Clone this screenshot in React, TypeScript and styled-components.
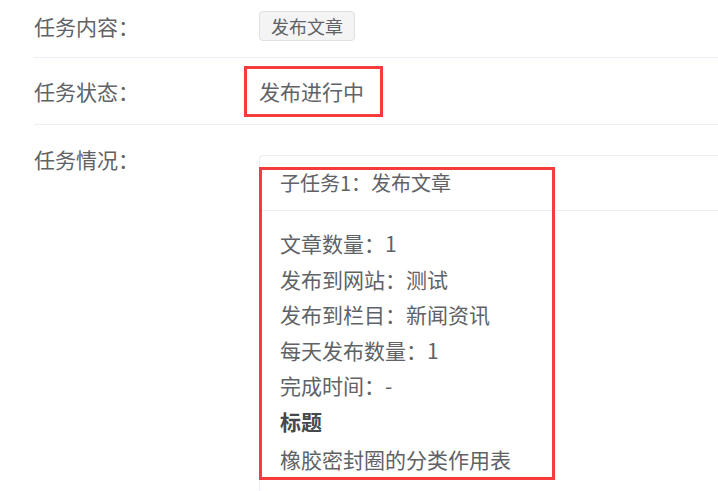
import React from "react";
import styled, { createGlobalStyle } from "styled-components";

const GlobalStyle = createGlobalStyle`
  html, body {
    margin: 0;
    padding: 0;
    background: #ffffff;
    overflow: hidden;
  }
  body {
    font-family: "Noto Sans CJK SC", "Noto Sans", sans-serif;
    color: #606266;
  }
`;

const Page = styled.div`
  padding-left: 34px;
  width: 684px;
`;

const Row = styled.div<{ $pt: number; $pb: number; $align?: string; $last?: boolean }>`
  display: grid;
  grid-template-columns: 225px 1fr;
  align-items: ${(p) => p.$align ?? "center"};
  padding-top: ${(p) => p.$pt}px;
  padding-bottom: ${(p) => p.$pb}px;
  border-bottom: ${(p) => (p.$last ? "none" : "1px solid #ebeef5")};
`;

const Label = styled.div<{ $mt?: number }>`
  font-size: 21px;
  line-height: 30px;
  color: #606266;
  margin-top: ${(p) => p.$mt ?? 0}px;
  white-space: nowrap;
`;

const Value = styled.div`
  font-size: 21px;
  line-height: 30px;
  color: #606266;
  white-space: nowrap;
`;

const Tag = styled.span`
  display: inline-flex;
  align-items: center;
  justify-self: start;
  box-sizing: border-box;
  height: 30px;
  padding: 0 11px;
  font-size: 18px;
  color: #606266;
  background: #f4f4f5;
  border: 1px solid #dedfe3;
  border-radius: 4px;
  white-space: nowrap;
`;

const Marked = styled.span`
  position: relative;
  justify-self: start;
  &::after {
    content: "";
    position: absolute;
    top: -10px;
    bottom: -11px;
    left: -15px;
    right: -19px;
    border: 3px solid #f63b3b;
    pointer-events: none;
  }
`;

const Card = styled.div`
  position: relative;
  margin-top: 30px;
  border: 1px solid #ebeef5;
  border-right: none;
  border-radius: 4px 0 0 4px;
  background: #fff;
`;

const CardHeader = styled.div`
  padding: 12px 20px;
  font-size: 20px;
  line-height: 30px;
  color: #606266;
  border-bottom: 1px solid #ebeef5;
  white-space: nowrap;
`;

const CardBody = styled.div`
  padding: 15px 20px 14px;
`;

const Line = styled.div<{ $mt?: number }>`
  font-size: 21px;
  line-height: 35.5px;
  color: #606266;
  margin-top: ${(p) => p.$mt ?? 0}px;
  white-space: nowrap;
`;

const Title = styled(Line)`
  font-weight: 700;
  color: #45484d;
`;

const Annotation = styled.div`
  position: absolute;
  top: 11px;
  left: -1px;
  width: 296px;
  height: 313px;
  box-sizing: border-box;
  border: 3px solid #f63b3b;
  pointer-events: none;
`;

const details = [
  "文章数量：1",
  "发布到网站：测试",
  "发布到栏目：新闻资讯",
  "每天发布数量：1",
  "完成时间：-",
];

export default function App() {
  return (
    <>
      <GlobalStyle />
      <Page>
        <Row $pt={11} $pb={16}>
          <Label>任务内容：</Label>
          <Tag>发布文章</Tag>
        </Row>
        <Row $pt={18} $pb={18}>
          <Label>任务状态：</Label>
          <Marked>
            <Value>发布进行中</Value>
          </Marked>
        </Row>
        <Row $pt={0} $pb={0} $align="start" $last>
          <Label $mt={19}>任务情况：</Label>
          <Card>
            <CardHeader>子任务1：发布文章</CardHeader>
            <CardBody>
              {details.map((d) => (
                <Line key={d}>{d}</Line>
              ))}
              <Title>标题</Title>
              <Line $mt={3}>橡胶密封圈的分类作用表</Line>
            </CardBody>
            <Annotation />
          </Card>
        </Row>
      </Page>
    </>
  );
}
